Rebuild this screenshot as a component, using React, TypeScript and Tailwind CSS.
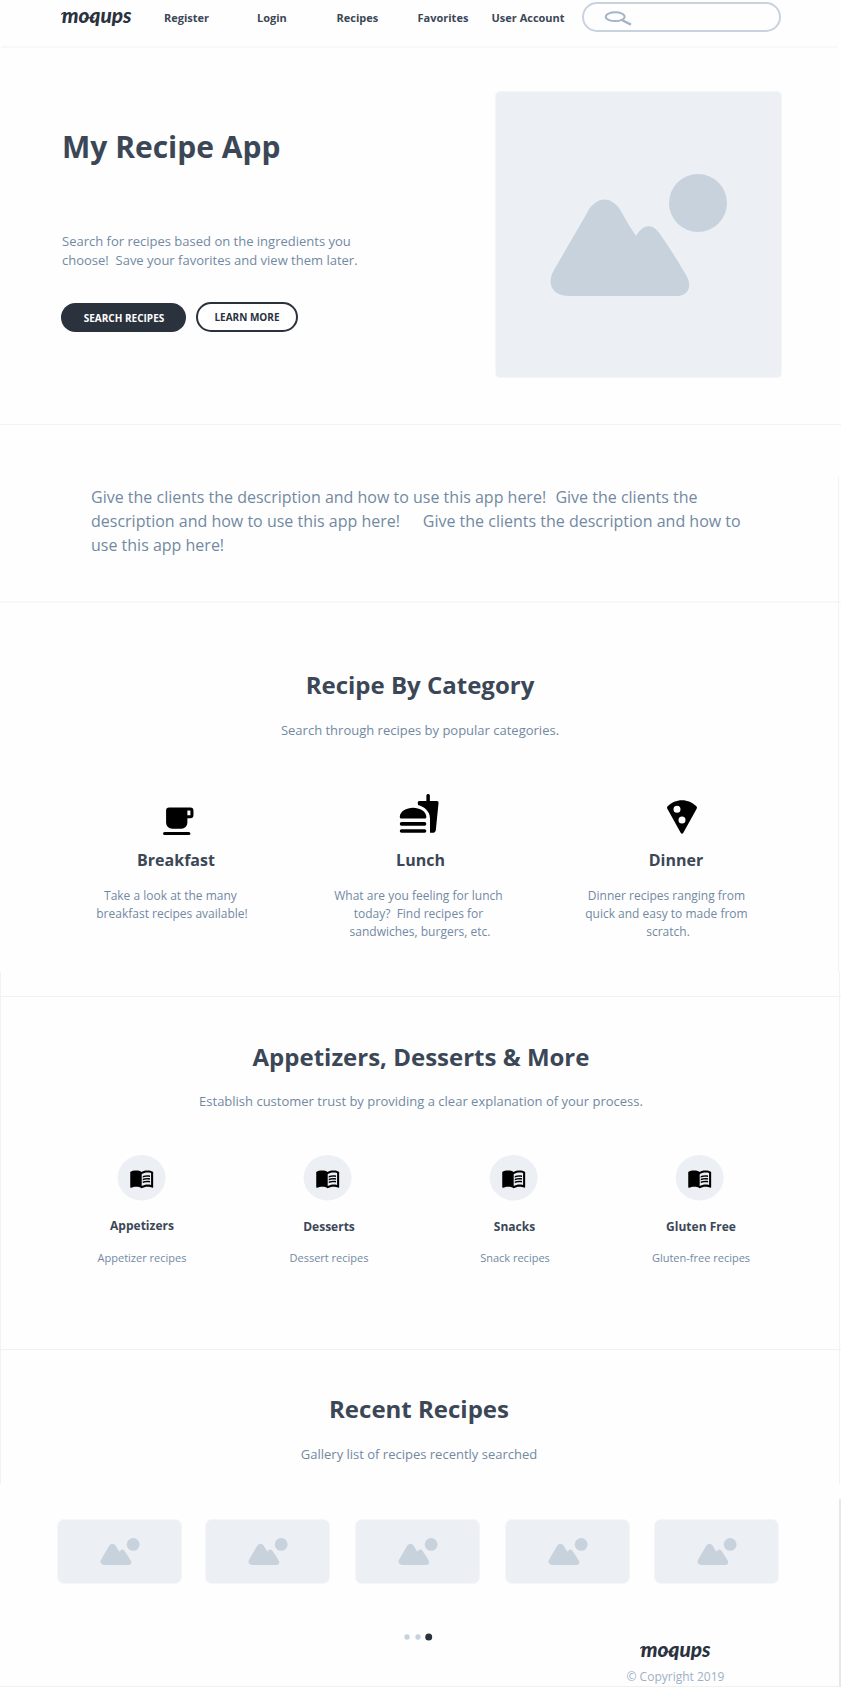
import type { ReactNode } from "react";
import { MdMenuBook } from "react-icons/md";

function Logo() {
  return (
    <svg width="74" height="24" viewBox="0 0 74 24" className="block overflow-visible" fill="#2a323e">
      <text
        x="1"
        y="17.3"
        textLength="69.5"
        lengthAdjust="spacingAndGlyphs"
        className="font-['Lato',sans-serif] text-[20px] font-black italic"
      >
        moqups
      </text>
      <path
        d="M.6 8.2Q2 6.8 4 7M24 12.8Q28 11.2 33 11.8"
        fill="none"
        stroke="#2a323e"
        strokeWidth="1.2"
        strokeLinecap="round"
      />
    </svg>
  );
}

function Picture({ className }: { className: string }) {
  return (
    <svg viewBox="0 0 177 122" className={className} fill="#c8d2dd">
      <circle cx="148" cy="29" r="29" />
      <path d="M37 39C46 21 63 21 72 39Q79 52 86 62C94 49 103 50 110 60Q124 80 136 101C143 113 138 122 126 122H20C2 122-4 110 4 96Z" />
    </svg>
  );
}

function CupIcon() {
  return (
    <svg viewBox="0 0 24 24" className="size-[36.5px]">
      <path
        fillRule="evenodd"
        d="M6 3h14a2 2 0 0 1 2 2v3a2 2 0 0 1-2 2h-2v3a4 4 0 0 1-4 4H8a4 4 0 0 1-4-4V5a2 2 0 0 1 2-2zm12 2v3h2V5zM3 19h16a1 1 0 0 1 0 2H3a1 1 0 0 1 0-2z"
      />
    </svg>
  );
}

function BurgerIcon() {
  return (
    <svg viewBox="0 0 24 24" className="size-[42.5px]">
      <path d="M18.06 23h1.66c.84 0 1.53-.65 1.63-1.47L22.9 6.1a.95.95 0 0 0-.95-1.05H18V2a1 1 0 0 0-1.97 0v3.05h-3.9a1 1 0 0 0-1 1.15l.2 1.19c1.71.47 3.31 1.32 4.27 2.26 1.44 1.42 2.46 2.89 2.46 5.29zM2 21h13a1 1 0 0 1 0 2H2a1 1 0 0 1 0-2zm6.5-12.1C4.8 8.9 1 10.9 1 14.1c0 .5.4.9 1 .9h13c.6 0 1.03-.4 1.03-.9 0-3.2-3.8-5.2-7.53-5.2zM2 17h13a1 1 0 0 1 0 2H2a1 1 0 0 1 0-2z" />
    </svg>
  );
}

function PizzaIcon() {
  return (
    <svg viewBox="0 0 24 24" className="size-10">
      <path
        fillRule="evenodd"
        d="M12 2C8.7 2 5.6 3.4 3.4 5.6c-.4.4-.5.9-.2 1.4l8 14.4c.4.8 1.2.8 1.6 0l8-14.4c.3-.5.2-1-.2-1.4C18.4 3.4 15.3 2 12 2zM9 5.3a2.1 2.1 0 1 1 0 4.2 2.1 2.1 0 0 1 0-4.2zM12 11.7a2.1 2.1 0 1 1 0 4.2 2.1 2.1 0 0 1 0-4.2z"
      />
    </svg>
  );
}

function SearchBox() {
  return (
    <div className="ml-[16.5px] flex h-[30px] w-[199px] rounded-full border-2 border-[#c8d3df] pt-[7px] pl-[20px]">
      <svg width="30" height="16" viewBox="0 0 30 16" fill="none" stroke="#a4b5c8">
        <ellipse cx="11.2" cy="5.7" rx="9.4" ry="4.4" strokeWidth="2" />
        <path d="M18.2 9.2l8.8 4.4" strokeWidth="2.4" />
      </svg>
    </div>
  );
}

function SectionTitle({ title, text, gap }: { title: string; text: string; gap: string }) {
  return (
    <div className="flex flex-col items-center text-center">
      <h2 className="text-2xl leading-8 font-bold">{title}</h2>
      <p className={`text-[13px] leading-5 text-[#7289a2] ${gap}`}>{text}</p>
    </div>
  );
}

function Category({
  icon,
  iconPad,
  title,
  titlePad,
  lines,
}: {
  icon: ReactNode;
  iconPad: string;
  title: string;
  titlePad: string;
  lines: string[];
}) {
  return (
    <div className="w-[200px]">
      <div className={`h-[57px] ${iconPad}`}>{icon}</div>
      <h3 className={`text-center text-base leading-6 font-bold ${titlePad}`}>{title}</h3>
      <div className="mt-[15px] text-center text-xs leading-[18px] whitespace-pre text-[#7289a2]">
        {lines.map((line) => (
          <p key={line}>{line}</p>
        ))}
      </div>
    </div>
  );
}

const nav = [
  { label: "Register", width: "w-[93px]" },
  { label: "Login", width: "w-[79.5px]" },
  { label: "Recipes", width: "w-[81px]" },
  { label: "Favorites", width: "w-[74px]" },
  { label: "User Account", width: "w-[74px]" },
];

const dishes = [
  { title: "Appetizers", text: "Appetizer recipes", shift: "pb-[2px] pl-px", textShift: "pl-px" },
  { title: "Desserts", text: "Dessert recipes", shift: "pt-px pb-px pl-[3px]", textShift: "pl-[3px]" },
  { title: "Snacks", text: "Snack recipes", shift: "pt-px pb-px pl-[2px]", textShift: "pl-[3px]" },
  { title: "Gluten Free", text: "Gluten-free recipes", shift: "pt-px pb-px pl-[3px]", textShift: "pl-[3px]" },
];

const gallery = ["ml-0", "ml-[23px]", "ml-[25px]", "ml-[25px]", "ml-[24px]"];

export default function App() {
  return (
    <div className="relative h-[1687px] w-[841px] overflow-hidden bg-[#fefefe] font-['Open_Sans',sans-serif] text-[#3b4756]">
      <header className="mx-px flex h-12 w-[836px] border-b-2 border-[#f7f8f9] pt-[2px] pl-[60px]">
        <div className="mt-[4px] w-[103px]">
          <Logo />
        </div>
        <nav className="flex pt-[8px] text-[11px] leading-4 font-bold whitespace-nowrap">
          {nav.map((item) => (
            <a key={item.label} className={item.width}>
              {item.label}
            </a>
          ))}
        </nav>
        <SearchBox />
      </header>

      <section className="flex h-[377px] border-b border-[#eff2f6]">
        <div className="w-[434px] pt-[79px] pl-[61px]">
          <h1 className="pl-px text-[30px] leading-10 font-bold">My Recipe App</h1>
          <p className="mt-[65px] pl-px text-[13px] leading-[19px] whitespace-pre text-[#7289a2]">
            {"Search for recipes based on the ingredients you\nchoose!  Save your favorites and view them later."}
          </p>
          <div className="mt-[32px] flex text-[10px] font-bold">
            <button className="mt-px h-[29px] w-[125px] rounded-full bg-[#2a323e] pt-px pl-px text-white">
              SEARCH RECIPES
            </button>
            <button className="ml-[10px] h-[30px] w-[102px] rounded-full border-2 border-[#2a323e] bg-white text-[#2a323e]">
              LEARN MORE
            </button>
          </div>
        </div>
        <div className="mt-[43px] ml-[61px] h-[287px] w-[287px] shrink-0 rounded-[5px] border border-[#f4f6f9] bg-[#ecf0f5] pt-[82px] pl-[54px]">
          <Picture className="h-[122px] w-[177px]" />
        </div>
      </section>

      <section className="h-[178px] border-b-2 border-[#f7f8f9] pt-[60px] pl-[91px]">
        <p className="text-base leading-6 whitespace-pre text-[#7289a2]">
          Give the clients the description and how to use this app here!{"  "}
          <span className="pl-px">Give the clients the</span>
          {"\n"}description and how to use this app here!{"     "}
          <span className="pl-[2px]">Give the clients the description and how to</span>
          {"\n"}use this app here!
        </p>
      </section>

      <section className="h-[394px] border-b border-[#eff1f5] pt-[66px]">
        <div className="w-[840px]">
          <SectionTitle title="Recipe By Category" text="Search through recipes by popular categories." gap="mt-[19px]" />
        </div>
        <div className="mt-[51px] flex pl-[72px]">
          <Category
            icon={<CupIcon />}
            iconPad="pt-[12px] pl-[88px]"
            title="Breakfast"
            titlePad="pl-[8px]"
            lines={["Take a look at the many ", "breakfast recipes available!"]}
          />
          <div className="ml-[48px]">
            <Category
              icon={<BurgerIcon />}
              iconPad="pt-[1px] pl-[78px]"
              title="Lunch"
              titlePad="pl-px"
              lines={["What are you feeling for lunch ", "today?  Find recipes for ", "sandwiches, burgers, etc."]}
            />
          </div>
          <div className="ml-[48px]">
            <Category
              icon={<PizzaIcon />}
              iconPad="pt-[6px] pl-[94px]"
              title="Dinner"
              titlePad="pl-[16px]"
              lines={["Dinner recipes ranging from ", "quick and easy to made from ", "scratch."]}
            />
          </div>
        </div>
      </section>

      <section className="h-[353px] border-b border-[#eff1f5] pt-[44px]">
        <div className="w-[842px]">
          <SectionTitle
            title="Appetizers, Desserts & More"
            text="Establish customer trust by providing a clear explanation of your process."
            gap="mt-[18px]"
          />
        </div>
        <div className="mt-[43.5px] flex pl-[48.5px]">
          {dishes.map((dish) => (
            <div key={dish.title} className="flex w-[186px] flex-col items-center">
              <svg width="48" height="46" viewBox="0 0 48 46" className="block overflow-visible">
                <ellipse cx="23.6" cy="22.8" rx="24" ry="22.7" fill="#ecf0f5" />
                <MdMenuBook x="11.2" y="10.8" size={25} color="#000" />
              </svg>
              <h3 className={`mt-[16.5px] text-xs leading-[18px] font-bold ${dish.shift}`}>{dish.title}</h3>
              <p className={`mt-[13px] text-[11px] leading-4 text-[#7289a2] ${dish.textShift}`}>{dish.text}</p>
            </div>
          ))}
        </div>
      </section>

      <section className="pt-[43px]">
        <div className="w-[838px]">
          <SectionTitle title="Recent Recipes" text="Gallery list of recipes recently searched" gap="mt-[19px]" />
        </div>
        <div className="mt-[55px] flex pl-[57px]">
          {gallery.map((margin, i) => (
            <div
              key={i}
              className={`h-[65px] w-[125px] shrink-0 rounded-[7px] border border-[#f4f6f9] bg-[#ecf0f5] pt-[18px] pl-[42px] ${margin}`}
            >
              <Picture className="h-[27px] w-10" />
            </div>
          ))}
        </div>
      </section>

      <footer className="pt-[49px]">
        <div className="h-[8px] pl-[404px]">
          <svg width="30" height="8" viewBox="0 0 30 8" className="block" fill="#c8d2dd">
            <circle cx="3" cy="4" r="2.7" />
            <circle cx="14" cy="4" r="2.7" />
            <circle cx="24.7" cy="4" r="3.5" fill="#2a323e" />
          </svg>
        </div>
        <div className="pl-[626px]">
          <div className="-mt-px pl-[13.5px]">
            <Logo />
          </div>
          <p className="mt-[4px] pl-[0.5px] text-xs leading-[18px] text-[#a0b0c4]">© Copyright 2019</p>
        </div>
      </footer>

      <div className="absolute top-[477px] left-[838px] h-[495px] w-px bg-[#f1f2f4]" />
      <div className="absolute top-[972px] left-0 h-[512px] w-[840px] border-x border-[#f1f2f4]" />
      <div className="absolute top-[1499px] left-[839px] h-[188px] w-[2px] bg-[#e8e8e8]" />
      <div className="absolute top-[1686px] left-0 h-px w-[839px] bg-[#f1f1f2]" />
    </div>
  );
}
